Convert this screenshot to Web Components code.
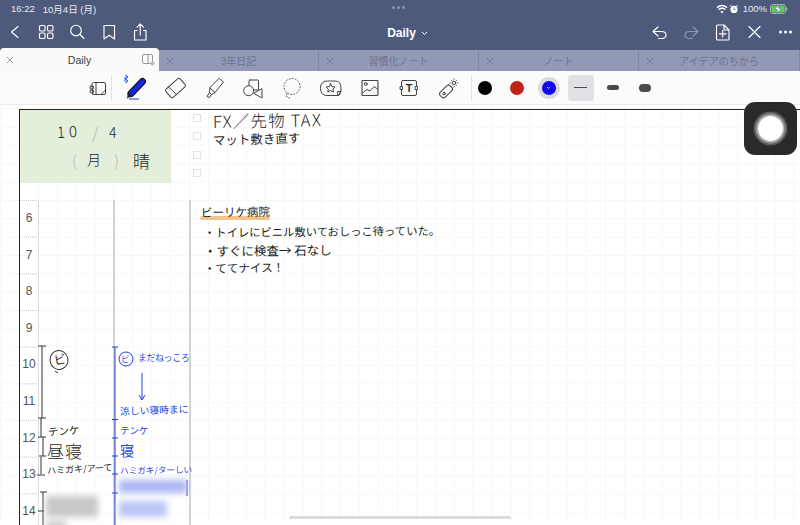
<!DOCTYPE html>
<html lang="ja"><head><meta charset="utf-8"><title>Daily</title>
<style>html,body{margin:0;padding:0;width:800px;height:525px;overflow:hidden;background:#fff;font-family:"Liberation Sans","Noto Sans CJK JP",sans-serif}</style>
</head><body>
<app-shell>
  <status-bar></status-bar>
  <nav-bar>Daily</nav-bar>
  <tab-strip>
    <tab-item active style="width:159px">Daily</tab-item>
    <tab-item>3年日記</tab-item>
    <tab-item>習慣化ノート</tab-item>
    <tab-item>ノート</tab-item>
    <tab-item style="flex:1">アイデアのちから</tab-item>
  </tab-strip>
  <tool-bar></tool-bar>
  <note-page>
    <hw-text x="213" y="112.500" size="16.500" rot="-1" sp="1.200" w="300">FX／先物 TAX</hw-text>
    <hw-text x="213" y="133.500" size="12.500" rot="-1.500">マット敷き直す</hw-text>
    <hw-text x="57" y="124" size="15" rot="-3" sp="4" w="300">10</hw-text>
    <hw-text x="92" y="124" size="16" color="#aaa" w="300">/</hw-text>
    <hw-text x="109" y="125" size="14" w="300">4</hw-text>
    <hw-text x="72" y="152" size="16" color="#b5b5b5" w="300">(</hw-text>
    <hw-text x="87" y="152" size="14" w="300">月</hw-text>
    <hw-text x="114" y="152" size="16" color="#b5b5b5" w="300">)</hw-text>
    <hw-text x="133" y="152" size="17" w="300">晴</hw-text>
    <hw-text x="201" y="206.500" size="11.500" rot="-1">ビーリケ病院</hw-text>
    <hw-text x="204" y="227" size="11.300" rot="-0.500">・トイレにビニル敷いておしっこ待っていた。</hw-text>
    <hw-text x="204" y="244.500" size="12.500" rot="-0.500">・すぐに検査→ 石なし</hw-text>
    <hw-text x="204" y="263" size="11.500" rot="-1">・ててナイス！</hw-text>
    <hw-text x="54" y="354" size="12" rot="-10">ビ</hw-text>
    <hw-text x="48" y="427" size="10.500" rot="-4">テンケ</hw-text>
    <hw-text x="47" y="442" size="17" sp="1" w="300">昼寝</hw-text>
    <hw-text x="47" y="466" size="9" rot="-3">ハミガキ/アーて</hw-text>
    <hw-text x="121" y="354" size="8.500" color="#1f3fe6">ビ</hw-text>
    <hw-text x="138" y="353" size="8.600" color="#1f3fe6">まだねっころ</hw-text>
    <hw-text x="120" y="407" size="9.800" color="#1f3fe6" rot="-2">涼しい寝時まに</hw-text>
    <hw-text x="120" y="426" size="9.500" color="#1f3fe6">テンケ</hw-text>
    <hw-text x="120" y="443" size="14" color="#1f3fe6">寝</hw-text>
    <hw-text x="120" y="466" size="8.600" color="#1f3fe6" rot="-1">ハミガキ/ターしい</hw-text>
  </note-page>
  <assistive-touch></assistive-touch>
  <home-bar></home-bar>
</app-shell>
<script>
const css=(s)=>`<style>${s}</style>`;
const ic=(w,h,inner,extra='')=>`<svg width="${w}" height="${h}" viewBox="0 0 ${w} ${h}" fill="none" ${extra}>${inner}</svg>`;
function def(name,render,after){customElements.define(name,class extends HTMLElement{constructor(){super();this.attachShadow({mode:'open'}).innerHTML=render(this);}connectedCallback(){after&&after(this);}});}

def('app-shell',()=>css(`:host{display:flex;flex-direction:column;width:800px;height:525px;position:relative;overflow:hidden;background:#fff}`)+`<slot></slot>`);

def('status-bar',()=>css(`:host{display:flex;align-items:center;justify-content:space-between;height:16px;background:#4d5a7c;color:#e8ebf2;font:9.5px "Liberation Sans","Noto Sans CJK JP",sans-serif;padding:1px 12px 0 11px;box-sizing:border-box;position:relative}
.l,.r{display:flex;align-items:center}.l span+span{margin-left:8px}.r svg{display:block}.pct{margin:0 3px 0 4px;font-size:9.500px}
.dots{position:absolute;left:392px;top:6px;display:flex;gap:2px}.dots i{width:3px;height:3px;border-radius:50%;background:#8b94ad}`)+
`<div class="l"><span>16:22</span><span>10月4日 (月)</span></div>
<div class="dots"><i></i><i></i><i></i></div>
<div class="r">
${ic(12,10,'<path d="M1 3.600Q6-.6 11 3.600M2.800 5.600Q6 3 9.200 5.600" stroke="#fff" stroke-width="1.500"/><path d="M6 9.400 4.400 7.500Q6 6.400 7.600 7.500Z" fill="#fff"/>')}
${ic(10,10,'<circle cx="5" cy="5.400" r="3.600" fill="#fff"/><path d="M1 2.500 2.500 1M9 2.500 7.500 1" stroke="#fff"/><path d="M5 3.500V5.500H6.400" stroke="#4d5a7c" stroke-width=".8"/>','style="margin-left:1px"')}
<span class="pct">100%</span>
${ic(18,10,'<rect x=".5" y=".5" width="15" height="9" rx="2.400" stroke="#a7aec2"/><rect x="1.500" y="1.500" width="13" height="7" rx="1.400" fill="#5ad251"/><rect x="16.200" y="3.400" width="1.200" height="3.200" rx=".6" fill="#a7aec2"/><path d="M9 .6 4.600 5.600H7.400L6.600 9.400 11.400 4.200H8.400Z" fill="#fff" stroke="#4d5a7c" stroke-width=".5"/>')}
</div>`);

const S='stroke="#fff" stroke-width="1.150" stroke-linecap="round" stroke-linejoin="round"';
def('nav-bar',()=>css(`:host{display:grid;grid-template-columns:1fr auto 1fr;align-items:center;height:32px;background:#4d5a7c;color:#fff;box-sizing:border-box;padding:0 0 0 4px}
.g{display:flex;align-items:center}.g.r{justify-content:flex-end;transform:translateX(1.500px)}.b{width:31.500px;height:24px;display:flex;align-items:center;justify-content:center;flex:none}
.t{display:flex;align-items:center;gap:5px;font:bold 12px "Liberation Sans",sans-serif;margin-left:11px;position:relative;top:1px}`)+
`<div class="g">
<div class="b" style="width:22px">${ic(22,22,`<path d="M14 5.500 7.500 11 14 16.500" ${S} stroke-width="1.600"/>`)}</div>
<div class="b" style="margin-left:4px">${ic(22,22,`<rect x="4.500" y="4.500" width="5.500" height="5.500" rx="1.300" ${S}/><rect x="12.500" y="4.500" width="5.500" height="5.500" rx="1.300" ${S}/><rect x="4.500" y="12" width="5.500" height="5.500" rx="1.300" ${S}/><rect x="12.500" y="12" width="5.500" height="5.500" rx="1.300" ${S}/>`)}</div>
<div class="b">${ic(22,22,`<circle cx="10" cy="9.500" r="5.300" ${S}/><path d="M14 13.500 18 17.500" ${S}/>`)}</div>
<div class="b">${ic(22,22,`<path d="M6 4.500H16.500V18L11.200 14.300 6 18Z" ${S}/>`)}</div>
<div class="b">${ic(22,22,`<path d="M8 9.500H5.500V19H17V9.500H14.500M11.200 14V3.500M8 6.200 11.200 3 14.500 6.200" ${S}/>`)}</div>
</div>
<div class="t"><slot></slot>${ic(7,5,'<path d="M1 1 3.500 3.500 6 1" stroke="#fff" stroke-width="1"/>')}</div>
<div class="g r">
<div class="b">${ic(22,22,`<path d="M9.500 6 4.500 10.500 9.500 15M4.500 10.500H13Q17.500 10.500 17.500 14Q17.500 17.500 13 17.500H10" ${S}/>`)}</div>
<div class="b">${ic(22,22,`<path d="M12.500 6 17.500 10.500 12.500 15M17.500 10.500H9Q4.500 10.500 4.500 14Q4.500 17.500 9 17.500H12" stroke="#8f98b2" stroke-width="1.150" stroke-linecap="round" stroke-linejoin="round"/>`)}</div>
<div class="b">${ic(22,22,`<path d="M5 5Q5 4 6 4H12.500L17.500 9V18Q17.500 19 16.500 19H6Q5 19 5 18ZM12.500 4V9H17.500M11.200 9.500V16M8 12.800H14.500" ${S}/>`)}</div>
<div class="b">${ic(22,22,`<path d="M5.500 5.500 16.500 16.500M16.500 5.500 5.500 16.500" ${S}/>`)}</div>
<div class="b">${ic(22,22,'<circle cx="6" cy="11" r="1.500" fill="#fff"/><circle cx="11" cy="11" r="1.500" fill="#fff"/><circle cx="16" cy="11" r="1.500" fill="#fff"/>')}</div>
</div>`);

def('tab-strip',()=>css(`:host{display:flex;align-items:flex-end;height:23px;background:#4d5a7c}`)+`<slot></slot>`);

def('tab-item',(h)=>{const a=h.hasAttribute('active');return css(`:host{display:flex;flex:none;width:160px;align-items:center;position:relative;box-sizing:border-box;justify-content:center;
font:${a?10.5:10}px "Liberation Sans","Noto Sans CJK JP",sans-serif;
height:${a?23:21}px;background:${a?'#fafafa':'#9199b4'};color:${a?'#3a3a3a':'#6d7391'};${a?'border-radius:4px 4px 0 0;':'border-right:1px solid #7f88a8;'}}
svg{position:absolute;left:${a?6:7}px;top:${a?8:7}px}.s{position:absolute;right:4px;top:6px}`)+
ic(8,8,`<path d="M1 1 7 7M7 1 1 7" stroke="${a?'#888':'#6d7391'}" stroke-width=".8"/>`)+`<slot></slot>`+
(a?`<span class="s">${ic(13,12,'<rect x=".5" y=".5" width="10" height="9" rx="1.500" stroke="#999"/><path d="M6 .5V9.500" stroke="#999"/><circle cx="10.500" cy="9.500" r="2" fill="#bbb"/>','style="position:static;display:block"')}</span>`:'')});

const D='stroke="#444" stroke-width="1" stroke-linecap="round" stroke-linejoin="round"';
const tools=[
 [`<path d="M10 10Q10 8.500 11.500 8.500H22Q23.500 8.500 23.500 10V19Q23.500 20.500 22 20.500H11Z" ${D}/><path d="M14 8.500V20.500M19 20.500 23.500 16" ${D}/><rect x="8" y="12" width="3.500" height="3" rx="1" ${D}/><rect x="8" y="16" width="3.500" height="3" rx="1" ${D}/>`],
 [`<path d="M4 3.500 8 7 6 9V1L8 3 4 6.500" stroke="#3d5bf0" stroke-width="1" fill="none"/><path d="M11 19.500 22.500 7.500" stroke="#111" stroke-width="7" stroke-linecap="round"/><path d="M11 19.500 22.500 7.500" stroke="#1526dc" stroke-width="4.800" stroke-linecap="round"/><path d="M8 18.500 12 22 7 24.500Z" fill="#222"/><path d="M9 25H19" stroke="#4a62e8" stroke-width="1.300"/>`],
 [`<rect x="9" y="4.500" width="11" height="19" rx="1.800" transform="rotate(48 14.500 14)" ${D}/><path d="M7 12.500 15 20" ${D}/>`],
 [`<path d="M19.500 4.500 23.500 8 15 18.500 10 14Z" ${D}/><path d="M10 14 9.500 18.500 11.500 20.500 15 18.500M9.500 18.500 7 22.500 9.500 23.500 11.500 20.500" ${D}/>`],
 [`<rect x="10" y="6" width="9.500" height="10" rx="1" ${D}/><circle cx="9.700" cy="16.700" r="5" fill="#fff" ${D}/><path d="M23 15V24L15 19.500Z" ${D}/>`],
 [`<circle cx="14" cy="12.500" r="8" stroke="#555" stroke-dasharray="1.800 1.300"/><path d="M9 19 8 22 12 24.500" stroke="#555" stroke-dasharray="1.800 1.300"/>`],
 [`<path d="M13 7H18Q24 7 24 14Q24 21.500 21 21.500H10Q3.500 21.500 3.500 14.200Q3.500 7 10 7Z" ${D}/><path d="M21 21.500 24 17.500H21Z" fill="#fff" ${D}/><path d="M13.500 9.500 15 12.500 18 13 15.900 15.100 16.400 18 13.500 16.600 10.800 18 11.300 15.100 9.200 13 12.300 12.500Z" ${D}/>`],
 [`<rect x="6" y="6.500" width="16" height="15" rx=".8" stroke="#444" stroke-width="1.100"/><circle cx="9.800" cy="10" r="1.400" ${D}/><path d="M6.500 19 11 15.500 14 17 18 12.500 21.500 15" ${D}/>`],
 [`<rect x="6.500" y="6.500" width="15" height="15" rx="1.500" ${D}/><rect x="5.500" y="12.500" width="2" height="3" fill="#fff" ${D}/><rect x="20.500" y="12.500" width="2" height="3" fill="#fff" ${D}/>`,'T'],
 [`<rect x="5" y="14" width="14" height="7" rx="2.500" transform="rotate(-45 12 17.500)" ${D}/><circle cx="10" cy="19.500" r="1.300" ${D}/><path d="M14.500 10.500 19 15" ${D}/><circle cx="20" cy="9" r="1.800" ${D}/><path d="M20 4.500V6M20 12V13.500M15.500 9H17M23 9H24.500M17 6 18 7M22 11 23 12M23 6 22 7" stroke="#555" stroke-width=".8"/>`]
];
const cols=['#000','#c02418','#1208ee'];
def('tool-bar',()=>css(`:host{display:flex;align-items:center;height:34px;background:#fbfbfb;border-bottom:1px solid #ebebeb;box-sizing:border-box;padding-left:81px;flex:none}
.c{height:34px;display:flex;align-items:center;justify-content:center;flex:none;width:39px;position:relative}
.sep{width:1px;height:26px;background:#e4e4e4;flex:none}
.t{position:absolute;left:0;top:3px;width:39px;text-align:center;font:bold 11px/28px "Liberation Sans",sans-serif;color:#333}
.d{width:14px;height:14px;border-radius:50%;display:flex;align-items:center;justify-content:center}
.sel{width:22px;height:22px;background:#dcdce0;border-radius:50%;display:flex;align-items:center;justify-content:center}
.w{width:32px}.box{width:26px;height:26px;border-radius:3px;background:#e1e1e5;display:flex;align-items:center;justify-content:center}
.st{background:#4a4a4a;display:block}`)+
`<div class="c" style="width:30px">${ic(28,28,tools[0][0])}</div><div class="sep"></div>
<div class="c" style="width:43.500px">${ic(28,28,tools[1][0])}</div>`+
tools.slice(2).map(t=>`<div class="c">${ic(28,28,t[0])}${t[1]?`<span class="t">${t[1]}</span>`:''}</div>`).join('')+
`<div class="sep" style="margin:0 -3px 0 3px"></div>
<div class="c w"><div class="d" style="background:${cols[0]}"></div></div>
<div class="c w"><div class="d" style="background:${cols[1]}"></div></div>
<div class="c w"><div class="sel"><div class="d" style="background:${cols[2]}">${ic(5,4,'<path d="M1 1 2.500 2.500 4 1" stroke="#fff" stroke-width=".7"/>')}</div></div></div>
<div class="c w"><div class="box"><span class="st" style="width:13px;height:1.500px"></span></div></div>
<div class="c w"><span class="st" style="width:12px;height:5px;border-radius:2.500px"></span></div>
<div class="c w"><span class="st" style="width:12px;height:8px;border-radius:4px"></span></div>`);

const B='#1f3fe6';
const hours=[6,7,8,9,10,11,12,13,14];
def('note-page',()=>css(`:host{display:block;position:relative;flex:1;background:#fff;overflow:hidden}
svg.g{position:absolute;left:0;top:0;width:800px;height:420px}
.num{position:absolute;left:20px;width:18px;text-align:center;font:12px/14px "Liberation Sans",sans-serif;color:#555}
.green{position:absolute;left:20px;top:5px;width:151px;height:73px;background:#e4efdb}
.top{position:absolute;left:19px;top:4px;right:0;height:1px;background:#222}
.left{position:absolute;left:19px;top:4px;bottom:0;width:1px;background:#222}
.mark{position:absolute;left:200px;top:111px;width:70px;height:4px;background:#f5c38a;border-radius:2px}
.cb{position:absolute;left:193px;width:8px;height:8px;border:1px solid #e2e2e2;box-sizing:border-box}
.bl{position:absolute;filter:blur(3px)}`)+
`<svg class="g" viewBox="0 0 800 420" aria-hidden="true">
<defs>
<pattern id="v" x="19" y="0" width="18.900" height="420" patternUnits="userSpaceOnUse"><path d="M.5 0V420" stroke="#f1f1f1" stroke-dasharray="1 1"/></pattern>
<pattern id="h" x="0" y="3.400" width="800" height="18.330" patternUnits="userSpaceOnUse"><path d="M0 .5H800" stroke="#f1f1f1" stroke-dasharray="1 1"/></pattern>
</defs>
<rect width="800" height="420" fill="url(#v)"/><rect width="800" height="420" fill="url(#h)"/>
</svg>
<div class="green"></div><div class="top"></div><div class="left"></div><div class="mark"></div>
${[9,27,46,64].map(t=>`<div class="cb" style="top:${t}px"></div>`).join('')}
${hours.map((n,i)=>`<div class="num" style="top:${106+i*36.6}px">${n}</div>`).join('')}
<svg class="g" viewBox="0 0 800 420" aria-hidden="true">
<path d="M38.500 95V420" stroke="#dcdcdc"/>
<path d="M114 95V420M190 95V420" stroke="#c9c9c9" stroke-width="1.600"/>
${hours.map((n,i)=>`<path d="M20 ${95.500+i*36.66}H38" stroke="#c8c8c8" stroke-dasharray="1 1"/>`).join('')}
<g stroke="#333" fill="none" stroke-width="1">
<path d="M38 241H46M42 241V313M38 313H46M41 313V332M43 332V351M38 332H46M39 351H46M41 352V369M37 370H45M40 387H47M43 387V420M38 406H44"/>
<ellipse cx="59" cy="255" rx="9" ry="9.500" transform="rotate(-12 59 255)"/><path d="M55 266 58 268"/>
</g>
<g stroke="${B}" fill="none" stroke-width="1">
<path d="M115 242V420M112 242H118M112 314.500H118M112 333H118M112 351H118M112 369H118M112 388H118"/>
<path d="M187 375V391"/>
<circle cx="126" cy="254" r="7"/>
<path d="M142 268V294M139 290 142 295 145 290"/>
</g></svg>
<div class="bl" style="left:119px;top:375px;width:68px;height:13px;background:#aeb8f5"></div>
<div class="bl" style="left:119px;top:396px;width:48px;height:16px;background:#bcc5f6"></div>
<div class="bl" style="left:46px;top:391px;width:52px;height:21px;background:#c8c8c8"></div>
<div class="bl" style="left:46px;top:415px;width:20px;height:10px;background:#cfcfcf"></div>
<slot></slot>`);

def('hw-text',(h)=>{const g=a=>h.getAttribute(a);return css(`:host{position:absolute;left:${g('x')}px;top:${g('y')-105}px;white-space:nowrap;
font:${g('w')||400} ${g('size')}px/1 "Noto Sans CJK JP",sans-serif;color:${g('color')||'#1c1c1c'};letter-spacing:${g('sp')||0}px;transform:rotate(${g('rot')||0}deg);transform-origin:left center}`)+`<slot></slot>`});

def('assistive-touch',()=>css(`:host{position:absolute;left:744px;top:102px;width:53px;height:53px;border-radius:11px;background:#2a2a2a;display:flex;align-items:center;justify-content:center}
.o{width:35px;height:35px;border-radius:50%;background:radial-gradient(circle,#fff 0 12px,#b5b5b5 12.500px 13.500px,#858585 14px 15px,#5a5a5a 15.500px 16.500px,#3a3a3a 17px)}`)+`<div class="o"></div>`);

def('home-bar',()=>css(`:host{position:absolute;left:289px;top:516px;width:222px;height:3px;border-radius:2px;background:#dcdcdc}`));
</script>
</body></html>
